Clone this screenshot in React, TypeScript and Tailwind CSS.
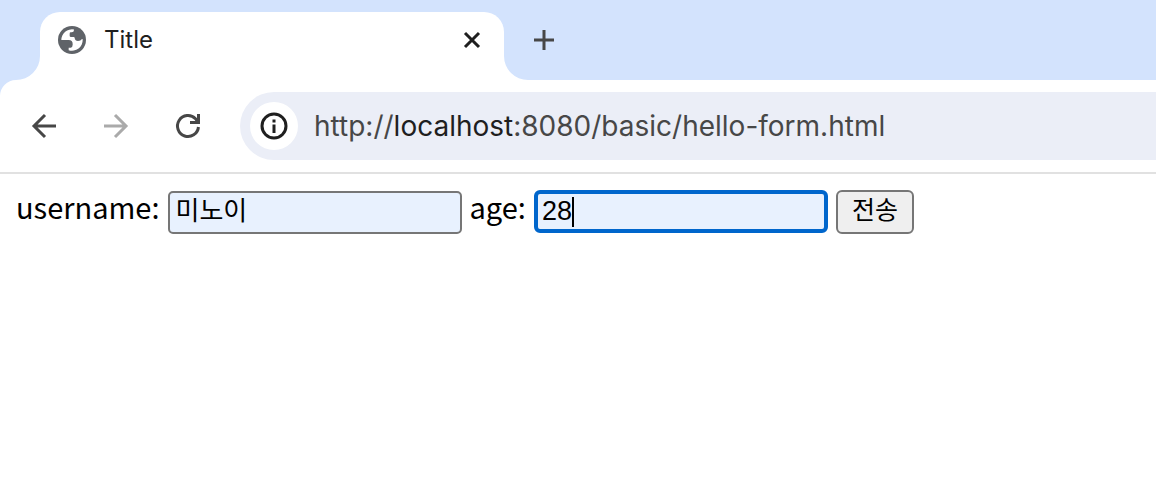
import { useState } from "react";
import type { ReactNode } from "react";

const GlobeIcon = () => (
    <svg viewBox="0 0 84 84" className="h-7 w-7 shrink-0" aria-hidden="true">
        <circle cx="42" cy="42" r="42" fill="#5f6368" />
        <path
            fill="#fff"
            d="M10 42A32 32 0 0 1 48 10.500V12Q48 19 41 19H38Q35 19 35 23V29Q35 33 39 33H47Q50 33 50 36Q51 45 60 45Q68 45 72 39L74 40A32 32 0 0 1 32 72.500V65H38Q44 64 44 56V54Q44 42 32 42Z"
        />
    </svg>
);

const StrokeIcon = ({ children }: { children: ReactNode }) => (
    <svg viewBox="0 0 32 32" className="h-8 w-8 shrink-0" fill="none" stroke="currentColor" strokeWidth="3" aria-hidden="true">
        {children}
    </svg>
);

const TabStrip = () => (
    <div className="flex items-end bg-[#d3e3fd] pl-4 pt-3">
        <svg viewBox="0 0 24 24" className="h-6 w-6 shrink-0" aria-hidden="true">
            <path d="M24 0V24H0A24 24 0 0 0 24 0Z" fill="#fff" />
        </svg>
        <div className="flex h-[68px] w-[464px] items-start rounded-t-[20px] bg-white pl-[18px] pr-4">
            <div className="flex h-14 flex-1 items-center gap-[18px]">
                <GlobeIcon />
                <span className="flex-1 text-2xl text-[#1f1f1f]">Title</span>
                <button type="button" aria-label="Close tab" className="text-[#1f1f1f]">
                    <StrokeIcon>
                        <path d="M9 9L23 23M23 9L9 23" />
                    </StrokeIcon>
                </button>
            </div>
        </div>
        <svg viewBox="0 0 24 24" className="h-6 w-6 shrink-0" aria-hidden="true">
            <path d="M0 0V24H24A24 24 0 0 1 0 0Z" fill="#fff" />
        </svg>
        <button type="button" aria-label="New tab" className="mb-6 text-[#474747]">
            <StrokeIcon>
                <path d="M16 6V26M6 16H26" />
            </StrokeIcon>
        </button>
    </div>
);

const Toolbar = () => (
    <div className="bg-[#d3e3fd]">
        <div className="flex items-center rounded-tl-2xl border-b-2 border-[#e1e1e1] bg-white py-3 pl-7">
            <div className="flex gap-10 pr-9 text-[#474747]">
                <button type="button" aria-label="Back">
                    <StrokeIcon>
                        <path d="M28 16H6M17 5L6 16L17 27" />
                    </StrokeIcon>
                </button>
                <button type="button" aria-label="Forward" disabled className="text-[#aaaaaa]">
                    <StrokeIcon>
                        <path d="M4 16H26M15 5L26 16L15 27" />
                    </StrokeIcon>
                </button>
                <button type="button" aria-label="Reload">
                    <StrokeIcon>
                        <path d="M26.450 17A10.500 10.500 0 1 1 23.500 8.700L26 12M26.500 4V12.500H18" />
                    </StrokeIcon>
                </button>
            </div>
            <div className="flex h-[68px] flex-1 items-center gap-4 rounded-l-full bg-[#ebeef7] pl-[10px]">
                <button
                    type="button"
                    aria-label="Site information"
                    className="flex h-12 w-12 items-center justify-center rounded-full bg-white text-[#1f1f1f]"
                >
                    <StrokeIcon>
                        <circle cx="16" cy="16" r="12" />
                        <path d="M16 14.500V23M16 9.500V12.500" />
                    </StrokeIcon>
                </button>
                <a href="http://localhost:8080/basic/hello-form.html" className="text-[28px] text-[#474747]">
                    http://<span className="text-[#1f1f1f]">localhost</span>:8080/basic/hello-form.html
                </a>
            </div>
        </div>
    </div>
);

const HelloForm = () => {
    const [username, setUsername] = useState("미노이");
    const [age, setAge] = useState("28");

    return (
        <form className="flex flex-wrap items-center gap-2 px-4 py-4 text-black" onSubmit={(e) => e.preventDefault()}>
            <label htmlFor="username" className="pb-3 font-['Noto_Sans_CJK_KR',sans-serif] text-[29px] leading-7">
                username:
            </label>
            <input
                id="username"
                type="text"
                value={username}
                onChange={(e) => setUsername(e.target.value)}
                className="h-[43px] w-[294px] rounded-[5px] border-2 border-[#767676] bg-[#e8f1fe] px-[6px] pb-2 font-['Liberation_Sans','Noto_Sans_CJK_KR',sans-serif] text-[26px] leading-8"
            />
            <label htmlFor="age" className="pb-3 font-['Noto_Sans_CJK_KR',sans-serif] text-[29px] leading-7">
                age:
            </label>
            <div className="flex h-[43px] w-[294px] items-center self-start rounded-md border-4 border-[#0066cc] bg-[#e8f1fe] pl-1">
                <input
                    id="age"
                    type="text"
                    value={age}
                    onChange={(e) => setAge(e.target.value)}
                    className="w-[30px] font-['Liberation_Sans',sans-serif] text-[27px] outline-none"
                />
                <span className="h-[30px] w-[2px] bg-black" />
            </div>
            <button
                type="submit"
                className="h-11 rounded-md border-2 border-[#767676] bg-[#efefef] px-[14px] pb-1 font-['Liberation_Sans','Noto_Sans_CJK_KR',sans-serif] text-[25px] leading-8"
            >
                전송
            </button>
        </form>
    );
};

const App = () => (
    <div className="min-h-screen bg-white font-['Inter',sans-serif]">
        <TabStrip />
        <Toolbar />
        <HelloForm />
    </div>
);

export default App;
